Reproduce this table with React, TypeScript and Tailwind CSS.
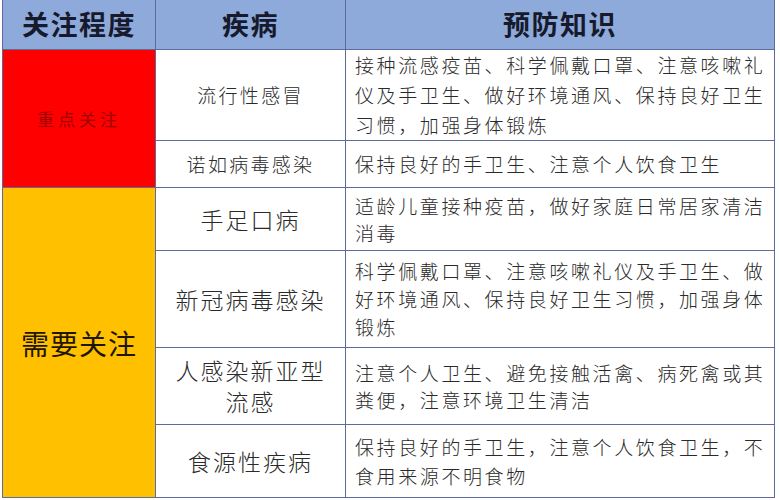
const cjk = { fontFamily: '"Noto Sans CJK SC", "Noto Sans", sans-serif' };

const advice: { lines: string[]; lead: string }[] = [
  {
    lines: [
      "接种流感疫苗、科学佩戴口罩、注意咳嗽礼",
      "仪及手卫生、做好环境通风、保持良好卫生",
      "习惯，加强身体锻炼",
    ],
    lead: "leading-[30px]",
  },
  { lines: ["保持良好的手卫生、注意个人饮食卫生"], lead: "leading-[28px]" },
  {
    lines: ["适龄儿童接种疫苗，做好家庭日常居家清洁", "消毒"],
    lead: "leading-[27px]",
  },
  {
    lines: [
      "科学佩戴口罩、注意咳嗽礼仪及手卫生、做",
      "好环境通风、保持良好卫生习惯，加强身体",
      "锻炼",
    ],
    lead: "leading-[28px]",
  },
  {
    lines: ["注意个人卫生、避免接触活禽、病死禽或其", "粪便，注意环境卫生清洁"],
    lead: "leading-[27px]",
  },
  {
    lines: ["保持良好的手卫生，注意个人饮食卫生，不", "食用来源不明食物"],
    lead: "leading-[29px]",
  },
];

const diseases: { lines: string[]; big: boolean }[] = [
  { lines: ["流行性感冒"], big: false },
  { lines: ["诺如病毒感染"], big: false },
  { lines: ["手足口病"], big: true },
  { lines: ["新冠病毒感染"], big: true },
  { lines: ["人感染新亚型", "流感"], big: true },
  { lines: ["食源性疾病"], big: true },
];

function Disease({ lines, big, row }: { lines: string[]; big: boolean; row: string }) {
  return (
    <div
      className={`${row} col-start-2 flex flex-col items-center justify-center bg-white text-[#2a2a2a] font-light ${
        big ? "text-[23px] tracking-[2px] leading-[31px]" : "text-[19px] tracking-[2.3px] leading-[28px]"
      }`}
    >
      {lines.map((l) => (
        <div key={l} className="whitespace-nowrap">
          {l}
        </div>
      ))}
    </div>
  );
}

function Advice({ lines, lead, row }: { lines: string[]; lead: string; row: string }) {
  return (
    <div
      className={`${row} col-start-3 flex flex-col justify-center bg-white pl-[9px] text-[19px] tracking-[2.6px] font-light text-[#2a2a2a] ${lead}`}
    >
      {lines.map((l) => (
        <div key={l} className="whitespace-nowrap">
          {l}
        </div>
      ))}
    </div>
  );
}

const rows = ["row-start-2", "row-start-3", "row-start-4", "row-start-5", "row-start-6", "row-start-7"];

export default function App() {
  return (
    <div className="w-[780px] h-[500px] bg-white overflow-hidden" style={cjk}>
      <div className="ml-[2px] w-[773px] bg-[#5d6b9c] px-px pb-px grid gap-px grid-cols-[152px_189px_428px] grid-rows-[49px_90px_46px_62px_96px_76px_72px]">
        <div className="row-start-1 col-start-1 flex items-center justify-center bg-[#8eaadb] text-[27px] font-bold text-[#161a2c] tracking-[1.5px]">
          关注程度
        </div>
        <div className="row-start-1 col-start-2 flex items-center justify-center bg-[#8eaadb] text-[27px] font-bold text-[#161a2c] tracking-[1.5px]">
          疾病
        </div>
        <div className="row-start-1 col-start-3 flex items-center justify-center bg-[#8eaadb] text-[27px] font-bold text-[#161a2c] tracking-[1.5px]">
          预防知识
        </div>

        <div className="row-start-2 row-span-2 col-start-1 flex items-center justify-center bg-[#ff0000] text-[17px] tracking-[4px] text-[#a10000]">
          重点关注
        </div>
        <div className="row-start-4 row-span-4 col-start-1 flex items-center justify-center bg-[#ffc000] text-[28px] tracking-[1px] text-[#1e1600]">
          需要关注
        </div>

        {diseases.map((d, i) => (
          <Disease key={i} lines={d.lines} big={d.big} row={rows[i]} />
        ))}
        {advice.map((a, i) => (
          <Advice key={i} lines={a.lines} lead={a.lead} row={rows[i]} />
        ))}
      </div>
    </div>
  );
}
